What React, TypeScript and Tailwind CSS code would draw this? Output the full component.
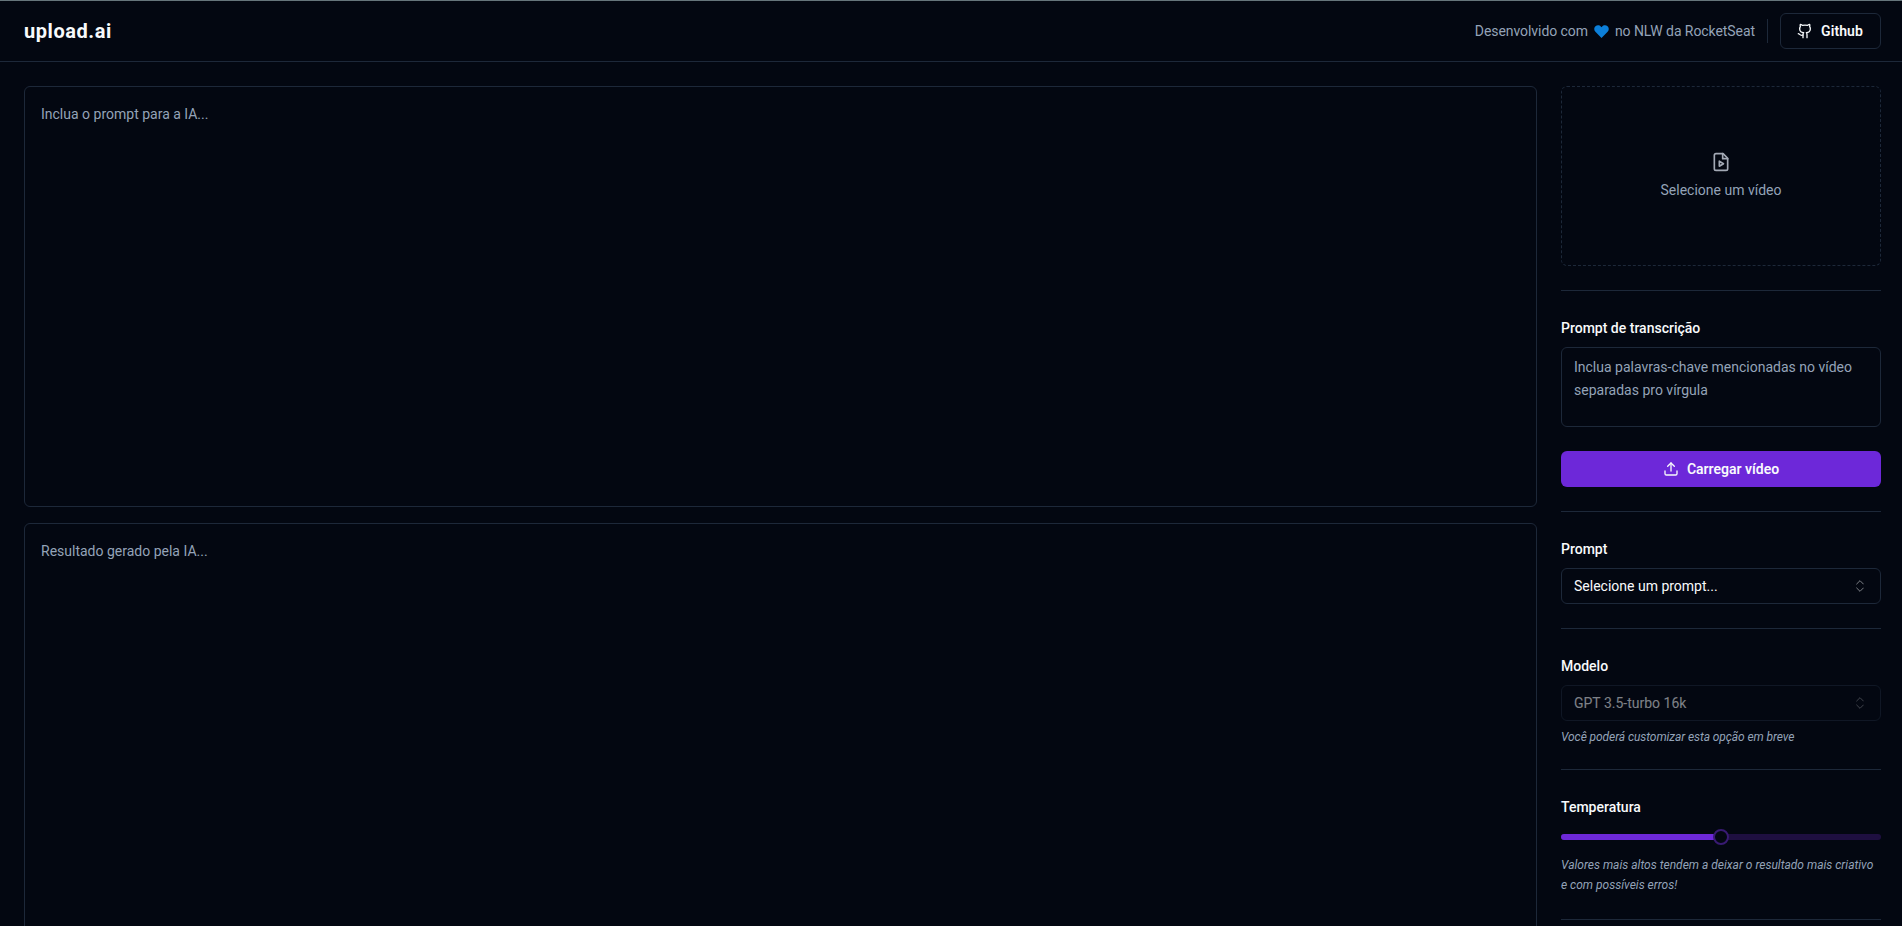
import * as Slider from "@radix-ui/react-slider";
import { ChevronsUpDown, Github, Upload } from "lucide-react";

const Separator = () => <div className="h-px w-full shrink-0 bg-[#1d2839]" />;

const FieldLabel = ({ children }: { children: string }) => (
  <label className="pt-[2px] text-sm leading-[22px] font-medium text-[#f8fafc]">{children}</label>
);

const SelectBox = ({ value, disabled }: { value: string; disabled?: boolean }) => (
  <button
    type="button"
    disabled={disabled}
    className={`flex h-9 w-full items-center justify-between rounded-md border border-[#1d2839] px-3 text-sm text-[#f8fafc] ${
      disabled ? "opacity-50" : ""
    }`}
  >
    <span>{value}</span>
    <ChevronsUpDown strokeWidth={1.5} className="h-4 w-4 opacity-50" />
  </button>
);

const App = () => {
  return (
    <div className="h-screen overflow-hidden bg-[#030711] font-['Roboto',sans-serif] text-[#f8fafc]">
      <header className="flex items-center justify-between border-t border-b border-t-[#66757b] border-b-[#1d2839] py-3 pr-[21px] pl-6">
        <h1 className="text-xl font-bold tracking-[0.55px]">upload.ai</h1>
        <div className="flex items-center gap-3">
          <span className="flex items-center text-sm tracking-[-0.07px] text-[#94a3b8]">
            Desenvolvido com
            {/* blue heart emoji */}
            <svg viewBox="0 0 24 24" className="mx-[6px] h-[15px] w-[15px] fill-[#0c7fd9]">
              <path d="M12 22.5 2.2 12.4C-.4 9.6-.1 5.6 2.4 3.4c2.6-2.2 6.600-1.800 8.800.8l.8 1 .8-1c2.200-2.600 6.200-3 8.800-.8 2.500 2.200 2.800 6.200.2 9z" />
            </svg>
            no NLW da RocketSeat
          </span>
          <div className="h-6 w-px bg-[#1d2839]" />
          <button
            type="button"
            className="flex h-9 items-center rounded-md border border-[#1d2839] pr-[17px] pl-4 text-sm font-semibold tracking-[0.1px]"
          >
            <Github className="mr-2 h-4 w-4" />
            Github
          </button>
        </div>
      </header>

      <main className="flex gap-6 py-6 pr-[21px] pl-6">
        <div className="flex flex-1 flex-col gap-4">
          <textarea
            className="h-[421px] w-full resize-none rounded-md border border-[#1d2839] bg-transparent p-4 text-sm leading-relaxed placeholder:text-[#94a3b8]"
            placeholder="Inclua o prompt para a IA..."
          />
          <textarea
            readOnly
            className="h-[421px] w-full resize-none rounded-md border border-[#1d2839] bg-transparent p-4 text-sm leading-relaxed placeholder:text-[#94a3b8]"
            placeholder="Resultado gerado pela IA..."
          />
        </div>

        <aside className="flex w-80 flex-col gap-6">
          <label className="flex aspect-video w-full flex-col items-center justify-center gap-2 rounded-md border border-dashed border-[#1d2839] text-sm text-[#94a3b8]">
            <svg
              viewBox="0 0 24 24"
              fill="none"
              stroke="currentColor"
              strokeWidth={2}
              strokeLinecap="round"
              strokeLinejoin="round"
              className="h-5 w-5 text-[#a3a9b5]"
            >
              <path d="M14.5 2H6a2 2 0 0 0-2 2v16a2 2 0 0 0 2 2h12a2 2 0 0 0 2-2V7.500L14.500 2z" />
              <path d="M14 2v6h6" />
              <path d="m10 11 5 3-5 3v-6Z" />
            </svg>
            Selecione um vídeo
          </label>

          <Separator />

          <div className="flex flex-col gap-2">
            <FieldLabel>Prompt de transcrição</FieldLabel>
            <textarea
              className="h-20 w-full resize-none rounded-md border border-[#1d2839] bg-transparent px-3 py-2 text-sm leading-relaxed placeholder:text-[#94a3b8]"
              placeholder="Inclua palavras-chave mencionadas no vídeo separadas pro vírgula"
            />
          </div>

          <button
            type="button"
            className="flex h-9 w-full items-center justify-center rounded-md bg-[#6d28d9] text-sm font-semibold text-[#f8fafc]"
          >
            <Upload className="mr-2 h-4 w-4" />
            Carregar vídeo
          </button>

          <Separator />

          <div className="flex flex-col gap-2">
            <FieldLabel>Prompt</FieldLabel>
            <SelectBox value="Selecione um prompt..." />
          </div>

          <Separator />

          <div className="flex flex-col gap-2">
            <FieldLabel>Modelo</FieldLabel>
            <SelectBox value="GPT 3.5-turbo 16k" disabled />
            <span className="text-xs leading-4 tracking-[-0.08px] text-[#94a3b8] italic">
              Você poderá customizar esta opção em breve
            </span>
          </div>

          <Separator />

          <div className="flex flex-col gap-[11px]">
            <FieldLabel>Temperatura</FieldLabel>
            <Slider.Root
              className="relative flex h-4 w-full items-center"
              defaultValue={[0.5]}
              min={0}
              max={1}
              step={0.1}
            >
              <Slider.Track className="relative h-1.5 w-full grow overflow-hidden rounded-full bg-[#1e0f40]">
                <Slider.Range className="absolute h-full bg-[#6d28d9]" />
              </Slider.Track>
              <Slider.Thumb className="block h-4 w-4 rounded-full border-2 border-[#381a72] bg-[#030711]" />
            </Slider.Root>
            <span className="text-xs leading-relaxed text-[#94a3b8] italic">
              Valores mais altos tendem a deixar o resultado mais criativo e com possíveis erros!
            </span>
          </div>

          <Separator />
        </aside>
      </main>
    </div>
  );
};

export default App;
